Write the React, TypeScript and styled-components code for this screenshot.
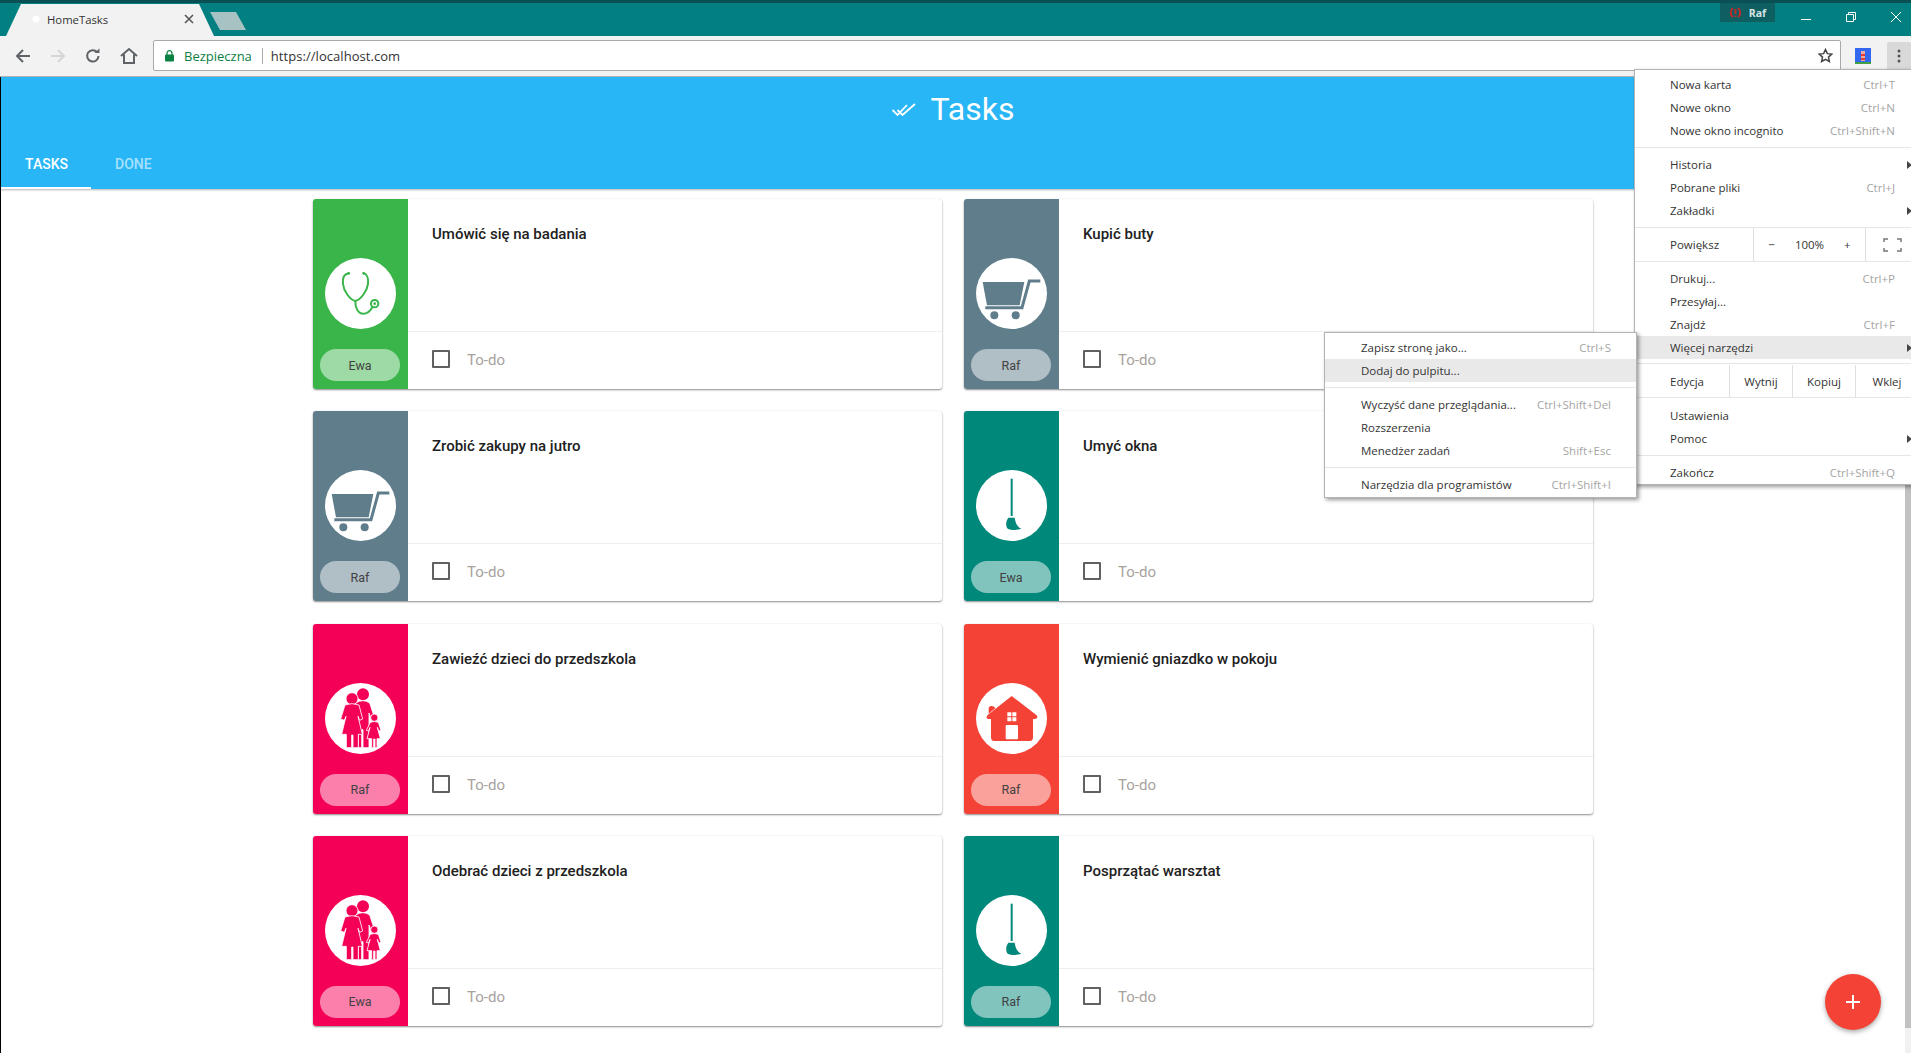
import * as React from "react"
import styled, { createGlobalStyle } from "styled-components"

const GlobalStyle = createGlobalStyle`
  html, body {
    margin: 0;
    height: 100%;
    overflow: hidden;
    background: #fff;
  }
  * { box-sizing: border-box; }
`

const Window = styled.div`
  position: relative;
  width: 1911px;
  height: 1053px;
  overflow: hidden;
  display: flex;
  flex-direction: column;
  font-family: "Roboto", "Liberation Sans", sans-serif;
`

/* browser chrome */
const TabStrip = styled.div`
  height: 36px;
  flex: none;
  background: #017f81;
  border-top: 3px solid #0a4f54;
  display: flex;
  align-items: flex-end;
  padding-left: 6px;
  position: relative;
`

const Tab = styled.div`
  width: 208px;
  height: 32px;
  background: #f2f2f2;
  clip-path: polygon(0 100%, 15px 0, 193px 0, 208px 100%);
  display: flex;
  align-items: center;
  padding: 0 0 2px 26px;
  font-family: "Open Sans", sans-serif;
  font-size: 11.3px;
  color: #333;
`

const TabTitle = styled.span`
  margin-left: 7px;
  flex: 1;
`

const TabClose = styled.svg`
  width: 10px;
  height: 10px;
  margin-right: 20px;
`

const NewTab = styled.div`
  width: 36px;
  height: 18px;
  margin: 0 0 6px -4px;
  background: #a6c2c3;
  clip-path: polygon(0 0, 26px 0, 36px 100%, 10px 100%);
`

const WindowControls = styled.div`
  position: absolute;
  top: -3px;
  right: -7px;
  height: 36px;
  display: flex;
  align-items: flex-start;
  color: #fff;
`

const ProfileBadge = styled.div`
  margin: 3px 8px 0 0;
  width: 55px;
  height: 19px;
  background: #0d5f62;
  display: flex;
  align-items: center;
  justify-content: center;
  gap: 7px;
  font-family: "Open Sans", sans-serif;
  font-size: 10.5px;
  font-weight: 700;
  color: #d8e4e4;
`

const WinButton = styled.div`
  width: 45px;
  height: 33px;
  display: flex;
  align-items: center;
  justify-content: center;
`

const Toolbar = styled.div`
  height: 41px;
  flex: none;
  background: #f2f2f2;
  display: flex;
  align-items: center;
  border-bottom: 1px solid #b5b5b5;
`

const NavButtons = styled.div`
  width: 153px;
  flex: none;
  display: flex;
  align-items: center;
  padding-left: 15px;
  gap: 19px;
`

const AddressBar = styled.div`
  width: 1688px;
  height: 31px;
  margin-top: -1px;
  background: #fff;
  border: 1px solid #a9a9a9;
  border-radius: 2px;
  display: flex;
  align-items: center;
  padding-left: 11px;
  font-family: "Open Sans", sans-serif;
  font-size: 13px;
  color: #333;
`

const Secure = styled.span`
  color: #0b8043;
  margin-left: 10px;
  padding-right: 10px;
  border-right: 1px solid #a9a9a9;
  line-height: 16px;
`

const Url = styled.span`
  margin-left: 8px;
  flex: 1;
  letter-spacing: 0.05px;
`

const StarIcon = styled.svg`
  width: 15px;
  height: 15px;
  margin-right: 7px;
`

const ExtensionSlot = styled.div`
  margin-left: 14px;
  width: 16px;
  height: 16px;
`

const MenuButton = styled.div`
  margin-left: 16px;
  width: 24px;
  height: 28px;
  background: #d9d9d9;
  border-radius: 2px;
  display: flex;
  align-items: center;
  justify-content: center;
`

/* page */
const Page = styled.div`
  flex: 1;
  min-height: 0;
  display: flex;
  border-left: 1px solid #000;
`

const Content = styled.div`
  flex: 1;
  min-width: 0;
`

const Header = styled.header`
  height: 112px;
  background: #29b6f6;
  box-shadow: 0 1px 2px rgba(0, 0, 0, 0.3);
  position: relative;
  display: flex;
  flex-direction: column;
`

const TitleRow = styled.div`
  height: 64px;
  display: flex;
  align-items: center;
  justify-content: center;
  gap: 15px;
  color: #fff;
`

const Title = styled.h1`
  margin: 0;
  font-size: 32px;
  font-weight: 400;
  line-height: 1;
`

const Tabs = styled.nav`
  height: 48px;
  display: flex;
`

const TabItem = styled.div<{ $active?: boolean }>`
  width: ${({ $active }) => ($active ? "90px" : "100px")};
  display: flex;
  align-items: center;
  padding: 0 0 1px 24px;
  font-size: 14px;
  font-weight: 500;
  color: ${({ $active }) => ($active ? "#fff" : "rgba(255,255,255,.6)")};
  border-bottom: 2px solid ${({ $active }) => ($active ? "#fff" : "transparent")};
`

const Grid = styled.main`
  width: 1280px;
  margin: 10px auto 0;
  display: grid;
  grid-template-columns: 1fr 1fr;
  column-gap: 22px;
  row-gap: 22.3px;
`

const Card = styled.article`
  height: 190px;
  display: flex;
  background: #fff;
  border-radius: 3px;
  overflow: hidden;
  box-shadow: 0 1px 2px rgba(0, 0, 0, 0.45), 0 0 1px rgba(0, 0, 0, 0.08);
`

const Side = styled.div<{ $color: string }>`
  width: 95px;
  flex: none;
  background: ${({ $color }) => $color};
  color: ${({ $color }) => $color};
  display: flex;
  flex-direction: column;
  align-items: center;
  padding: 59px 0 8px;
`

const IconCircle = styled.div`
  width: 71px;
  height: 71px;
  border-radius: 50%;
  background: #fff;
  flex: none;
`

const Owner = styled.div`
  margin: auto 1px 0 0;
  width: 80px;
  height: 32px;
  border-radius: 16px;
  background: rgba(255, 255, 255, 0.5);
  display: flex;
  align-items: center;
  justify-content: center;
  font-size: 12.5px;
  color: #424242;
`

const Body = styled.div`
  flex: 1;
  display: flex;
  flex-direction: column;
`

const CardTitle = styled.div`
  flex: 1;
  padding: 26px 24px 0;
  font-size: 15px;
  font-weight: 500;
  line-height: 18px;
  color: #212121;
`

const CardFooter = styled.div`
  height: 58px;
  flex: none;
  border-top: 1px solid #eee;
  display: flex;
  align-items: center;
  padding: 0 24px 3px;
  gap: 17px;
`

const Checkbox = styled.div`
  width: 18px;
  height: 18px;
  border: 2px solid #616161;
  border-radius: 1px;
`

const TodoLabel = styled.span`
  padding-top: 2px;
  font-size: 15px;
  color: #a8a29e;
`

const Scrollbar = styled.div`
  width: 6px;
  flex: none;
  background: #f1f1f1;
`

const ScrollThumb = styled.div`
  height: 951px;
  background: #c1c1c1;
`

const Fab = styled.button`
  position: absolute;
  left: 1825px;
  top: 974px;
  width: 56px;
  height: 56px;
  border: 0;
  padding: 0;
  border-radius: 50%;
  background: #f44336;
  box-shadow: 0 2px 5px rgba(0, 0, 0, 0.35);
  display: flex;
  align-items: center;
  justify-content: center;
`

/* chrome menus */
const Menu = styled.div<{ $sub?: boolean }>`
  position: absolute;
  background: #fff;
  border: 1px solid #b4b4b4;
  box-shadow: 2px 2px 4px rgba(0, 0, 0, 0.4);
  font-family: "Open Sans", sans-serif;
  font-size: 11.5px;
  color: #333;
  left: ${({ $sub }) => ($sub ? "1324px" : "1634px")};
  top: ${({ $sub }) => ($sub ? "332px" : "69px")};
  width: ${({ $sub }) => ($sub ? "313px" : "290px")};
  height: ${({ $sub }) => ($sub ? "166px" : "416px")};
  padding-top: 3px;
`

const MenuRow = styled.div<{ $hot?: boolean; $sub?: boolean }>`
  height: 23px;
  display: flex;
  align-items: center;
  justify-content: space-between;
  padding: ${({ $sub }) => ($sub ? "0 25px 0 36px" : "0 28px 0 35px")};
  background: ${({ $hot }) => ($hot ? "#e9e9e9" : "transparent")};
  position: relative;
`

const Shortcut = styled.span`
  color: #a5a5a5;
`

const SubArrow = styled.i`
  position: absolute;
  left: 272px;
  top: 8px;
  border-left: 5px solid #444;
  border-top: 4px solid transparent;
  border-bottom: 4px solid transparent;
`

const MenuSeparator = styled.div`
  height: 1px;
  margin: 5px 0;
  background: #e6e6e6;
`

const SplitRow = styled.div<{ $first: number; $cell: number; $loose?: boolean }>`
  height: 35px;
  margin: ${({ $loose }) => ($loose ? "4px 0 6px" : "5px 0")};
  padding-top: ${({ $loose }) => ($loose ? "1px" : "0")};
  border-top: 1px solid #e6e6e6;
  border-bottom: 1px solid #e6e6e6;
  display: grid;
  grid-template-columns: ${({ $first }) => $first}px repeat(3, ${({ $cell }) => $cell}px);
  align-items: stretch;
`

const SplitCell = styled.div<{ $label?: boolean }>`
  display: flex;
  align-items: center;
  justify-content: ${({ $label }) => ($label ? "flex-start" : "center")};
  padding-left: ${({ $label }) => ($label ? "35px" : "0")};
  border-left: ${({ $label }) => ($label ? "0" : "1px solid #e0e0e0")};
`

const ZoomValue = styled.span`
  margin: 0 20px;
`

const FullscreenIcon = styled.svg`
  width: 19px;
  height: 14px;
  margin-left: -58px;
`

const IconSvg = styled.svg`
  display: block;
  width: 71px;
  height: 71px;
`

const Stethoscope = () => (
  <IconSvg viewBox="0 0 213 213" fill="none" stroke="currentColor" strokeWidth="6" strokeLinecap="round">
    <path d="M71 46C58 48 52 60 54 78C56 100 75 125 91 129C107 125 126 100 129 78C131 60 125 48 116 46" />
    <path d="M91 129C90 150 100 167 115 167C128 167 136 158 141 149" />
    <circle cx="149" cy="137" r="11" />
    <circle cx="149" cy="137" r="4" fill="currentColor" stroke="none" />
    <circle cx="71" cy="46" r="4" fill="currentColor" stroke="none" />
    <circle cx="116" cy="46" r="4" fill="currentColor" stroke="none" />
  </IconSvg>
)

const Cart = () => (
  <IconSvg viewBox="0 0 213 213" fill="none" stroke="currentColor">
    <path d="M20 72H145L131 142H33Z" fill="currentColor" stroke="none" />
    <path d="M193 69H160L138 149H28" strokeWidth="9" />
    <circle cx="55" cy="172" r="12" fill="currentColor" stroke="none" />
    <circle cx="119" cy="172" r="12" fill="currentColor" stroke="none" />
  </IconSvg>
)

const Broom = () => (
  <IconSvg viewBox="0 0 213 213" fill="currentColor">
    <rect x="104" y="26" width="6" height="112" />
    <path d="M97 143H116C118 156 122 170 136 176C118 181 105 181 99 178C88 174 88 155 97 143Z" />
  </IconSvg>
)

const Family = () => (
  <IconSvg viewBox="0 0 213 213" fill="currentColor" stroke="#fff" strokeWidth="2.5">
    <circle cx="114" cy="34" r="18" stroke="none" />
    <path d="M92 60Q114 46 134 60L147 100L138 106L132 90V194H114V140H110V194H100V100Z" />
    <circle cx="81" cy="47" r="18" />
    <path d="M60 66Q81 58 102 66L113 108L104 112L99 100L112 154H100V194H84V156H80V194H64V154H50L63 100L58 112L47 108Z" />
    <circle cx="148" cy="104" r="11" />
    <path d="M136 118Q148 113 160 118L168 142L161 144L157 133L166 167H156V194H150V168H146V194H140V167H126L135 133L131 144L124 142Z" />
  </IconSvg>
)

const House = () => (
  <IconSvg viewBox="0 0 213 213">
    <path
      fill="currentColor"
      d="M107 39L38 94C28 102 30 110 45 108V164C45 170 49 174 55 174H161C167 174 171 170 171 164V108C186 108 188 100 178 94ZM38 92V74C42 66 54 68 58 76Z"
    />
    <path
      fill="#fff"
      d="M94 88H106V100H94ZM109 88H121V100H109ZM94 103H106V115H94ZM109 103H121V115H109ZM93 126H122C125 126 126 127 126 130V165C126 168 125 169 122 169H93C90 169 89 168 89 165V130C89 127 90 126 93 126Z"
    />
  </IconSvg>
)

const tasks = [
  { title: "Umówić się na badania", owner: "Ewa", color: "#3ab54a", icon: <Stethoscope /> },
  { title: "Kupić buty", owner: "Raf", color: "#607d8b", icon: <Cart /> },
  { title: "Zrobić zakupy na jutro", owner: "Raf", color: "#607d8b", icon: <Cart /> },
  { title: "Umyć okna", owner: "Ewa", color: "#00897b", icon: <Broom /> },
  { title: "Zawieźć dzieci do przedszkola", owner: "Raf", color: "#f50057", icon: <Family /> },
  { title: "Wymienić gniazdko w pokoju", owner: "Raf", color: "#f44336", icon: <House /> },
  { title: "Odebrać dzieci z przedszkola", owner: "Ewa", color: "#f50057", icon: <Family /> },
  { title: "Posprzątać warsztat", owner: "Raf", color: "#00897b", icon: <Broom /> },
]

const TaskCard = ({ task }: { task: (typeof tasks)[number] }) => (
  <Card>
    <Side $color={task.color}>
      <IconCircle>{task.icon}</IconCircle>
      <Owner>{task.owner}</Owner>
    </Side>
    <Body>
      <CardTitle>{task.title}</CardTitle>
      <CardFooter>
        <Checkbox />
        <TodoLabel>To-do</TodoLabel>
      </CardFooter>
    </Body>
  </Card>
)

const BrowserChrome = () => (
  <>
    <TabStrip>
      <Tab>
        <svg width="8" height="8" viewBox="0 0 8 8">
          <circle cx="4" cy="4" r="3.5" fill="#fff" />
        </svg>
        <TabTitle>HomeTasks</TabTitle>
        <TabClose viewBox="0 0 10 10" stroke="#555" strokeWidth="1.6">
          <path d="M1 1L9 9M9 1L1 9" />
        </TabClose>
      </Tab>
      <NewTab />
      <WindowControls>
        <ProfileBadge>
          <svg width="13" height="13" viewBox="0 0 13 13" fill="none" stroke="#c62828" strokeWidth="2">
            <path d="M4 2C1 4 1 9 4 11M9 2C12 4 12 9 9 11M6.5 3V8M6.5 9.5V11" />
          </svg>
          Raf
        </ProfileBadge>
        <WinButton>
          <svg width="10" height="10" viewBox="0 0 10 10" stroke="#fff">
            <path d="M0 7.5H10" />
          </svg>
        </WinButton>
        <WinButton>
          <svg width="10" height="10" viewBox="0 0 10 10" fill="none" stroke="#fff">
            <path d="M.5 2.5H7.5V9.5H.5ZM2.5 2.5V.5H9.5V7.5H7.5" />
          </svg>
        </WinButton>
        <WinButton>
          <svg width="10" height="10" viewBox="0 0 10 10" stroke="#fff">
            <path d="M0 0L10 10M10 0L0 10" />
          </svg>
        </WinButton>
      </WindowControls>
    </TabStrip>
    <Toolbar>
      <NavButtons>
        <svg width="16" height="16" viewBox="0 0 16 16" fill="none" stroke="#5f6368" strokeWidth="2">
          <path d="M15 8H2M8 2L2 8L8 14" />
        </svg>
        <svg width="16" height="16" viewBox="0 0 16 16" fill="none" stroke="#d5d5d5" strokeWidth="2">
          <path d="M1 8H14M8 2L14 8L8 14" />
        </svg>
        <svg width="16" height="16" viewBox="0 0 16 16" fill="none" stroke="#5f6368" strokeWidth="2">
          <path d="M13.5 8A5.7 5.7 0 1 1 12 4" />
          <path d="M9.5 5H14.5V0.5Z" fill="#5f6368" stroke="none" />
        </svg>
        <svg width="18" height="18" viewBox="0 0 18 18" fill="none" stroke="#5f6368" strokeWidth="2">
          <path d="M1 9L9 2L17 9M4 7.5V16H14V7.5" />
        </svg>
      </NavButtons>
      <AddressBar>
        <svg width="9" height="12" viewBox="0 0 9 12">
          <path d="M2 5V3.2A2.5 2.5 0 0 1 7 3.2V5" fill="none" stroke="#0b8043" strokeWidth="1.2" />
          <rect y="4.5" width="9" height="7" rx="1" fill="#0b8043" />
        </svg>
        <Secure>Bezpieczna</Secure>
        <Url>https://localhost.com</Url>
        <StarIcon viewBox="0 0 24 24" fill="none" stroke="#444" strokeWidth="2.4">
          <path d="M12 2.5L15 9L22 9.8L16.8 14.6L18.2 21.5L12 18L5.8 21.5L7.2 14.6L2 9.8L9 9Z" />
        </StarIcon>
      </AddressBar>
      <ExtensionSlot>
        <svg width="16" height="16" viewBox="0 0 16 16">
          <rect width="16" height="16" fill="#3367f0" />
          <rect x="6" y="3" width="4" height="10" fill="#f4a9a0" />
          <rect x="6" y="6" width="4" height="2" fill="#e53935" />
          <rect x="6" y="10" width="4" height="2" fill="#e53935" />
          <rect y="14" width="16" height="2" fill="#43a047" />
        </svg>
      </ExtensionSlot>
      <MenuButton>
        <svg width="4" height="14" viewBox="0 0 4 14" fill="#555">
          <circle cx="2" cy="2" r="1.5" />
          <circle cx="2" cy="7" r="1.5" />
          <circle cx="2" cy="12" r="1.5" />
        </svg>
      </MenuButton>
    </Toolbar>
  </>
)

const ChromeMenu = () => (
  <Menu>
    <MenuRow>Nowa karta<Shortcut>Ctrl+T</Shortcut></MenuRow>
    <MenuRow>Nowe okno<Shortcut>Ctrl+N</Shortcut></MenuRow>
    <MenuRow>Nowe okno incognito<Shortcut>Ctrl+Shift+N</Shortcut></MenuRow>
    <MenuSeparator />
    <MenuRow>Historia<SubArrow /></MenuRow>
    <MenuRow>Pobrane pliki<Shortcut>Ctrl+J</Shortcut></MenuRow>
    <MenuRow>Zakładki<SubArrow /></MenuRow>
    <SplitRow $first={118} $cell={112}>
      <SplitCell $label>Powiększ</SplitCell>
      <SplitCell>
        <span>−</span>
        <ZoomValue>100%</ZoomValue>
        <span>+</span>
      </SplitCell>
      <SplitCell>
        <FullscreenIcon viewBox="0 0 19 14" fill="none" stroke="#777" strokeWidth="1.5">
          <path d="M1 4V1H5M14 1H18V4M18 10V13H14M5 13H1V10" />
        </FullscreenIcon>
      </SplitCell>
    </SplitRow>
    <MenuRow>Drukuj...<Shortcut>Ctrl+P</Shortcut></MenuRow>
    <MenuRow>Przesyłaj...</MenuRow>
    <MenuRow>Znajdź<Shortcut>Ctrl+F</Shortcut></MenuRow>
    <MenuRow $hot>Więcej narzędzi<SubArrow /></MenuRow>
    <SplitRow $first={94} $cell={63} $loose>
      <SplitCell $label>Edycja</SplitCell>
      <SplitCell>Wytnij</SplitCell>
      <SplitCell>Kopiuj</SplitCell>
      <SplitCell>Wklej</SplitCell>
    </SplitRow>
    <MenuRow>Ustawienia</MenuRow>
    <MenuRow>Pomoc<SubArrow /></MenuRow>
    <MenuSeparator />
    <MenuRow>Zakończ<Shortcut>Ctrl+Shift+Q</Shortcut></MenuRow>
  </Menu>
)

const ToolsMenu = () => (
  <Menu $sub>
    <MenuRow $sub>Zapisz stronę jako...<Shortcut>Ctrl+S</Shortcut></MenuRow>
    <MenuRow $sub $hot>Dodaj do pulpitu...</MenuRow>
    <MenuSeparator />
    <MenuRow $sub>Wyczyść dane przeglądania...<Shortcut>Ctrl+Shift+Del</Shortcut></MenuRow>
    <MenuRow $sub>Rozszerzenia</MenuRow>
    <MenuRow $sub>Menedżer zadań<Shortcut>Shift+Esc</Shortcut></MenuRow>
    <MenuSeparator />
    <MenuRow $sub>Narzędzia dla programistów<Shortcut>Ctrl+Shift+I</Shortcut></MenuRow>
  </Menu>
)

const App = () => (
  <Window>
    <GlobalStyle />
    <BrowserChrome />
    <Page>
      <Content>
        <Header>
          <TitleRow>
            <svg width="24" height="13" viewBox="0 0 24 13" fill="none" stroke="#fff" strokeWidth="1.8">
              <path d="M0.5 7L5.5 12L15 2M5.5 7L10.5 12L23 1" />
            </svg>
            <Title>Tasks</Title>
          </TitleRow>
          <Tabs>
            <TabItem $active>TASKS</TabItem>
            <TabItem>DONE</TabItem>
          </Tabs>
        </Header>
        <Grid>
          {tasks.map(task => (
            <TaskCard key={task.title} task={task} />
          ))}
        </Grid>
      </Content>
      <Scrollbar>
        <ScrollThumb />
      </Scrollbar>
    </Page>
    <Fab>
      <svg width="14" height="14" viewBox="0 0 14 14" stroke="#fff" strokeWidth="2">
        <path d="M7 0V14M0 7H14" />
      </svg>
    </Fab>
    <ChromeMenu />
    <ToolsMenu />
  </Window>
)

export default App
